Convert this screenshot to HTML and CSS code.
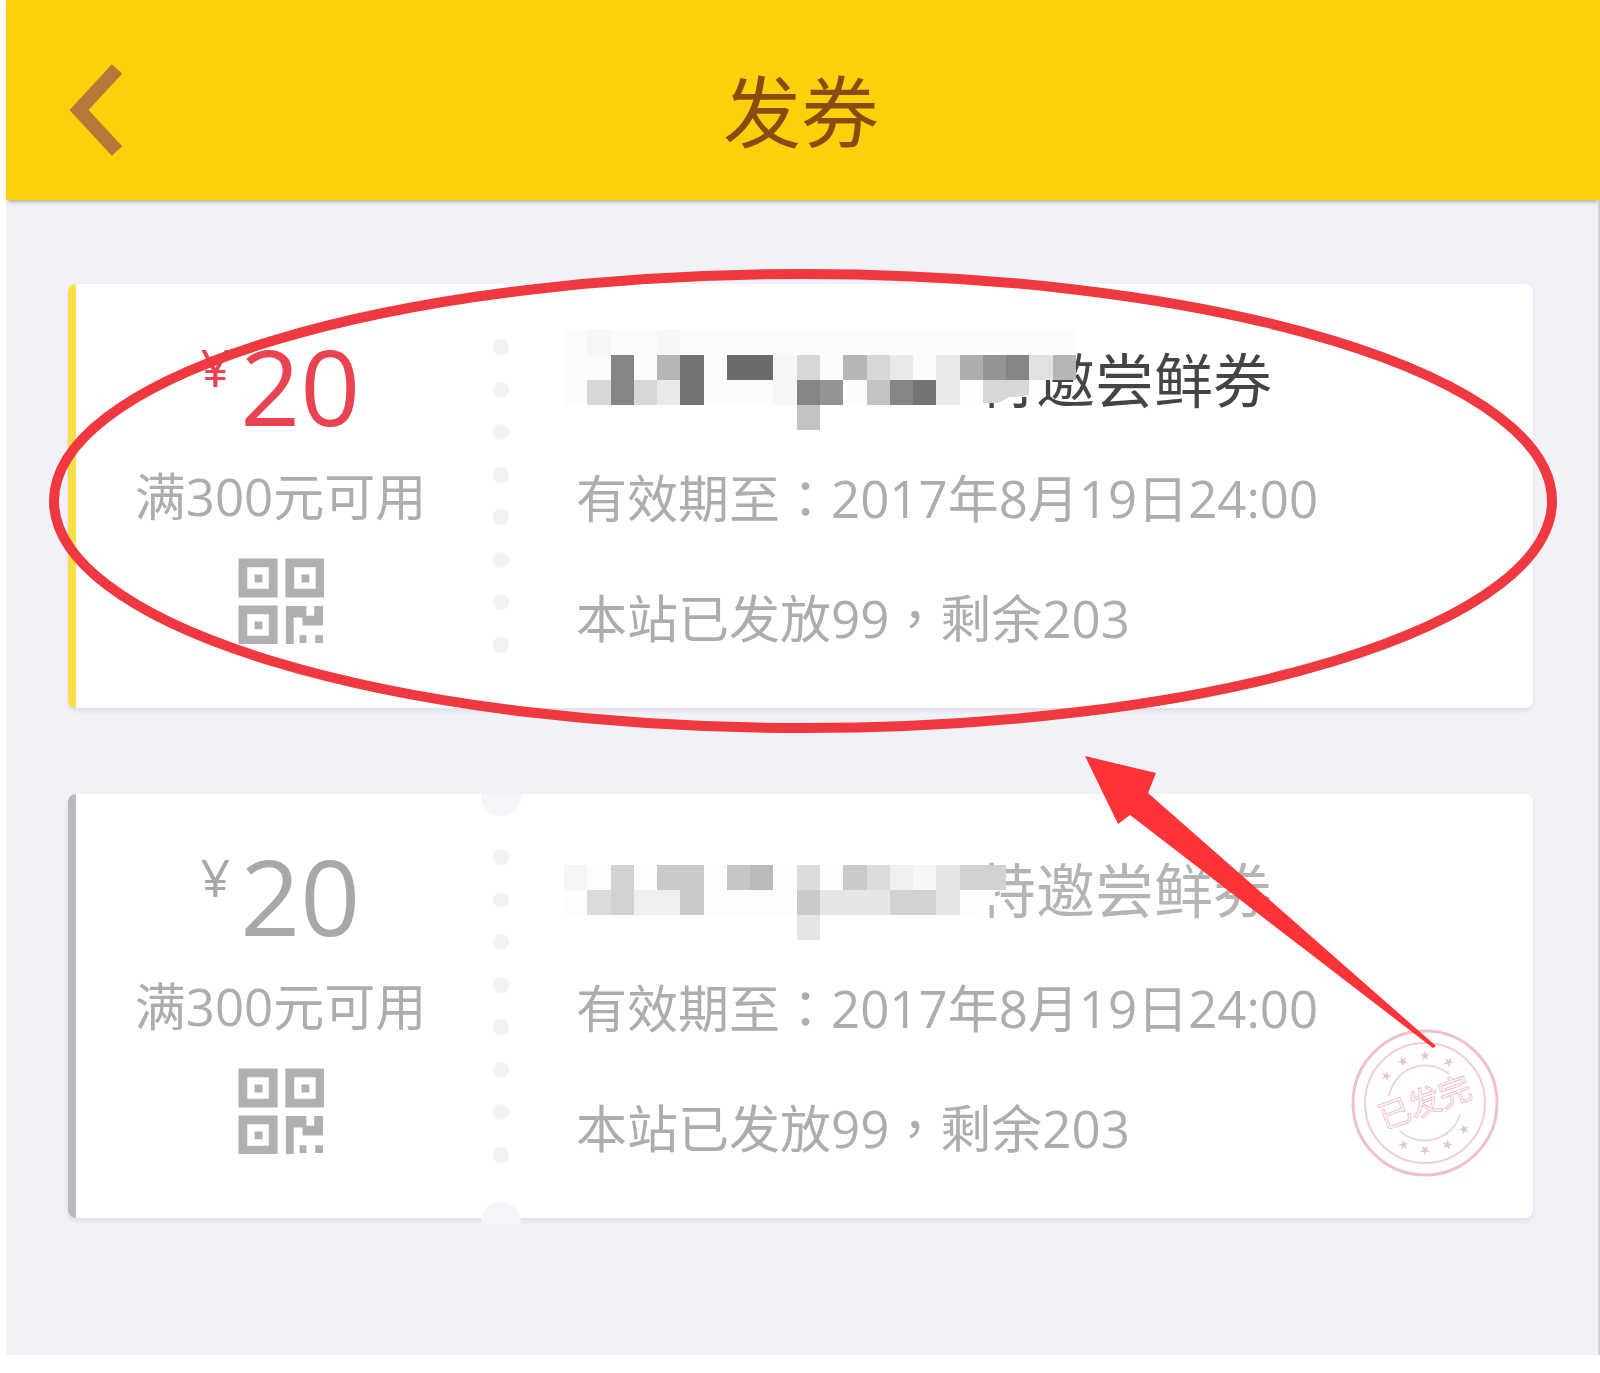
FILE: index.html
```
<!DOCTYPE html>
<html lang="zh-CN">
<head>
<meta charset="utf-8">
<meta name="viewport" content="width=device-width, initial-scale=1">
<title>发券</title>
<link rel="stylesheet" href="styles.css">
</head>
<body>
<svg class="defs" aria-hidden="true">
  <symbol id="qr" viewBox="0 0 88 88">
    <path fill="none" stroke="currentColor" stroke-width="9" d="M5 5h31v31H5zM53 5h31v31H53zM5 53h31v31H5z"/>
    <path fill="currentColor" d="M17 17h8v8h-8zM65 17h8v8h-8zM17 65h8v8h-8zM49 49h21v10h8V49h9v20H66v-8h-9v27h-8zM63 79h7v8h-7zM79 79h8v8h-8z"/>
  </symbol>
</svg>
<div class="screen">
  <header class="topbar">
    <button class="back" type="button" aria-label="返回">
      <svg viewBox="0 0 56 96" width="56" height="96"><path d="M47 7 9 48l38 41" fill="none" stroke="#b47838" stroke-width="14"/></svg>
    </button>
    <h1 class="topbar-title">发券</h1>
  </header>

  <main class="coupons">
    <article class="coupon">
      <div class="stub">
        <p class="amount"><span class="yen">¥</span>20</p>
        <p class="condition">满300元可用</p>
        <svg class="qr"><use href="#qr"/></svg>
      </div>
      <div class="divider"><i></i><i></i><i></i><i></i><i></i><i></i><i></i><i></i></div>
      <div class="body">
        <h2 class="name">
          <svg class="mosaic" viewBox="0 0 22 4" preserveAspectRatio="none" shape-rendering="crispEdges">
            <path fill="#fdfcfd" d="M0 0h22v1H0zM0 1h18v2H0z"/>
            <path fill="#f8f6f7" d="M1 0h1v1H1zM4 0h1v1H4zM9 1h1v2H9z"/>
            <path fill="#fefefe" d="M17 2h3.2v.6l-.6.1-.6.2H17z"/>
            <path fill="#d8d7d8" d="M1 2h1v1H1zM3 2h1v1H3zM10 1h1v1h-1zM13 1h1v1h-1zM18 2h2v.6l-.9.1-.4.2H18z"/>
            <path fill="#868485" d="M2 1h1v2H2zM10 2h1v1h-1zM14 2h1v1h-1zM19 1h1v1h-1z"/>
            <path fill="#b8b5b7" d="M4 1h1v1H4zM12 1h1v1h-1zM21 1h1v1h-1z"/>
            <path fill="#757274" d="M5 1h1v2H5zM15 2h1v1h-1z"/>
            <path fill="#6a6b6a" d="M7 1h2v1H7z"/>
            <path fill="#eae8ea" d="M4 2h1v1H4zM14 1h1v1h-1zM16 1h1v2h-1z"/>
            <path fill="#c3c3c3" d="M10 3h1v1h-1zM13 2h1v1h-1z"/>
            <path fill="#959495" d="M11 2h1v1h-1zM18 1h1v1h-1z"/>
            <path fill="#afadaf" d="M17 1h1v1h-1z"/>
            <path fill="#e2e1e2" d="M20 1h1v1h-1z"/>
          </svg>
          <span>特邀尝鲜券</span>
        </h2>
        <p class="detail">有效期至<span class="mark" lang="zh-TW">：</span>2017年8月19日24:00</p>
        <p class="detail">本站已发放99<span class="mark" lang="zh-TW">，</span>剩余203</p>
      </div>
    </article>

    <article class="coupon coupon-used">
      <div class="stub">
        <p class="amount"><span class="yen">¥</span>20</p>
        <p class="condition">满300元可用</p>
        <svg class="qr"><use href="#qr"/></svg>
      </div>
      <div class="divider"><i></i><i></i><i></i><i></i><i></i><i></i><i></i><i></i></div>
      <div class="body">
        <h2 class="name">
          <svg class="mosaic" viewBox="0 0 22 4" preserveAspectRatio="none" shape-rendering="crispEdges">
            <path fill="#fdfdfd" d="M0 1h18.5v1.6H18V3H0z"/>
            <path fill="#f6f6f6" d="M0 1h1v1H0zM15 1h1v1h-1z"/>
            <path fill="#dcdcdc" d="M1 2h1v1H1zM10 1h1v1h-1zM13 1h1v1h-1z"/>
            <path fill="#d2d2d2" d="M2 1h1v2H2zM14 2h2v1h-2zM17 1h2v1h-2z"/>
            <path fill="#cacaca" d="M4 1h2v2H5V2H4zM10 2h1v1h-1zM12 1h1v1h-1z"/>
            <path fill="#efefef" d="M3 2h2v1H3zM14 1h1v1h-1z"/>
            <path fill="#c5c5c5" d="M7 1h1v1H7z"/>
            <path fill="#bababa" d="M8 1h1v1H8z"/>
            <path fill="#e6e6e6" d="M10 3h1v1h-1zM11 2h3v1h-3zM16 1h1v2h-1z"/>
          </svg>
          <span>特邀尝鲜券</span>
        </h2>
        <p class="detail">有效期至<span class="mark" lang="zh-TW">：</span>2017年8月19日24:00</p>
        <p class="detail">本站已发放99<span class="mark" lang="zh-TW">，</span>剩余203</p>
      </div>
      <svg class="stamp" viewBox="0 0 150 150">
        <g fill="none" stroke="#f3ccd4">
          <circle cx="75" cy="75" r="72" stroke="#efc2cb" stroke-width="3"/>
          <circle cx="75" cy="75" r="60" stroke-width="2"/>
          <path stroke="#eed6db" stroke-width="2" d="M39 68a37 37 0 0 1 60-22M110 87a37 37 0 0 1-60 16"/>
        </g>
        <g fill="#e6c6cd">
          <path id="star" d="m75 22 1 4h4l-3 2 1 4-3-2-3 2 1-4-3-2h4z"/>
          <use href="#star" transform="rotate(-28 75 75)"/>
          <use href="#star" transform="rotate(-55 75 75)"/>
          <use href="#star" transform="rotate(30 75 75)"/>
          <use href="#star" transform="rotate(124 75 75)"/>
          <use href="#star" transform="rotate(152 75 75)"/>
          <use href="#star" transform="rotate(180 75 75)"/>
          <use href="#star" transform="rotate(207 75 75)"/>
        </g>
        <text class="stamp-text" x="75" y="86" transform="rotate(-20 75 75)">已发完</text>
      </svg>
    </article>
  </main>

  <svg class="marks" viewBox="0 0 1600 1373" aria-hidden="true">
    <ellipse cx="803" cy="501" rx="749" ry="227" fill="none" stroke="#ef383f" stroke-width="10"/>
    <path fill="#fd3338" d="m1085 756 71 17-8 20 288 253-3 2-303-233-12 9z"/>
  </svg>
</div>
</body>
</html>
```
FILE: styles.css
```
* { box-sizing: border-box; }

body {
  margin: 0;
  background: #fff;
  font-family: "Open Sans", "Noto Sans CJK SC", sans-serif;
  color: #adadad;
}

h1, h2, p { margin: 0; font-weight: 400; }

.defs { position: absolute; width: 0; height: 0; }

.screen {
  position: relative;
  margin: 0 0 18px 6px;
  background: #f1f2f8;
  border-right: 2px solid #d2d2d6;
}

.topbar {
  display: grid;
  grid-template-columns: 160px 1fr 164px;
  align-items: center;
  height: 200px;
  padding-top: 20px;
  margin-right: -2px;
  background: #fcd00a;
  box-shadow: 0 4px 4px -2px #b5ac98;
}

.back {
  display: flex;
  width: 120px;
  padding: 0 0 0 64px;
  border: 0;
  background: none;
  cursor: pointer;
}

.topbar-title {
  font-size: 78px;
  line-height: 96px;
  padding-top: 4px;
  text-align: center;
  color: #8a4b10;
}

.coupons {
  display: flex;
  flex-direction: column;
  gap: 86px;
  padding: 84px 65px 137px 62px;
}

.coupon {
  position: relative;
  display: grid;
  grid-template-columns: 409px 32px 1fr;
  min-height: 424px;
  background: #fff;
  border-left: 8px solid #f9de48;
  border-radius: 8px;
  box-shadow: 0 3px 4px #dedee6;
}

.stub {
  display: flex;
  flex-direction: column;
  align-items: center;
  padding-top: 48px;
}

.amount {
  display: flex;
  gap: 10px;
  font-size: 105px;
  line-height: 108px;
  color: #e8434f;
}

.yen { font-size: 52px; line-height: 70px; }

.condition {
  margin-top: 26px;
  font-size: 51px;
  line-height: 60px;
  white-space: nowrap;
}

.qr {
  width: 86px;
  height: 86px;
  margin-top: 32px;
  color: #b0b0b0;
}

.divider {
  display: flex;
  flex-direction: column;
  align-items: center;
  justify-content: space-between;
  padding: 55px 0;
}

.divider i {
  width: 16px;
  height: 16px;
  border-radius: 50%;
  background: #f2f2f3;
}

.body { padding: 56px 0 0 59px; }

.name {
  display: flex;
  align-items: center;
  height: 80px;
  font-size: 59px;
  line-height: 80px;
  white-space: nowrap;
  color: #444;
}

.mosaic {
  flex: none;
  position: relative;
  z-index: 1;
  width: 512px;
  height: 100px;
  margin: 0 -99px 0 -12px;
}

.detail {
  margin-top: 60px;
  font-size: 51px;
  line-height: 60px;
  white-space: nowrap;
}

.name + .detail { margin-top: 48px; }

/* Full-width punctuation centred in its square */
.mark { font-family: "Noto Sans CJK TC", sans-serif; line-height: 1; }

.coupon-used { border-left-color: #b9b9c0; }
.coupon-used .amount { color: #a8a8a8; }
.coupon-used .name { color: #b4b4b4; }

.coupon-used .divider::before,
.coupon-used .divider::after {
  content: "";
  position: absolute;
  left: 405px;
  width: 40px;
  height: 22px;
  background: #f4f5f8;
}

.coupon-used .divider::before { top: 0; border-radius: 0 0 20px 20px; }
.coupon-used .divider::after { bottom: -6px; border-radius: 20px 20px 0 0; }

.stamp {
  position: absolute;
  right: 33px;
  bottom: 40px;
  width: 150px;
  height: 150px;
}

.stamp-text {
  font-size: 32px;
  text-anchor: middle;
  fill: #fff;
  stroke: #f1c3cd;
  stroke-width: 1px;
}

.marks {
  position: absolute;
  top: 0;
  left: -6px;
  width: calc(100% + 8px);
  pointer-events: none;
  z-index: 2;
}
```
